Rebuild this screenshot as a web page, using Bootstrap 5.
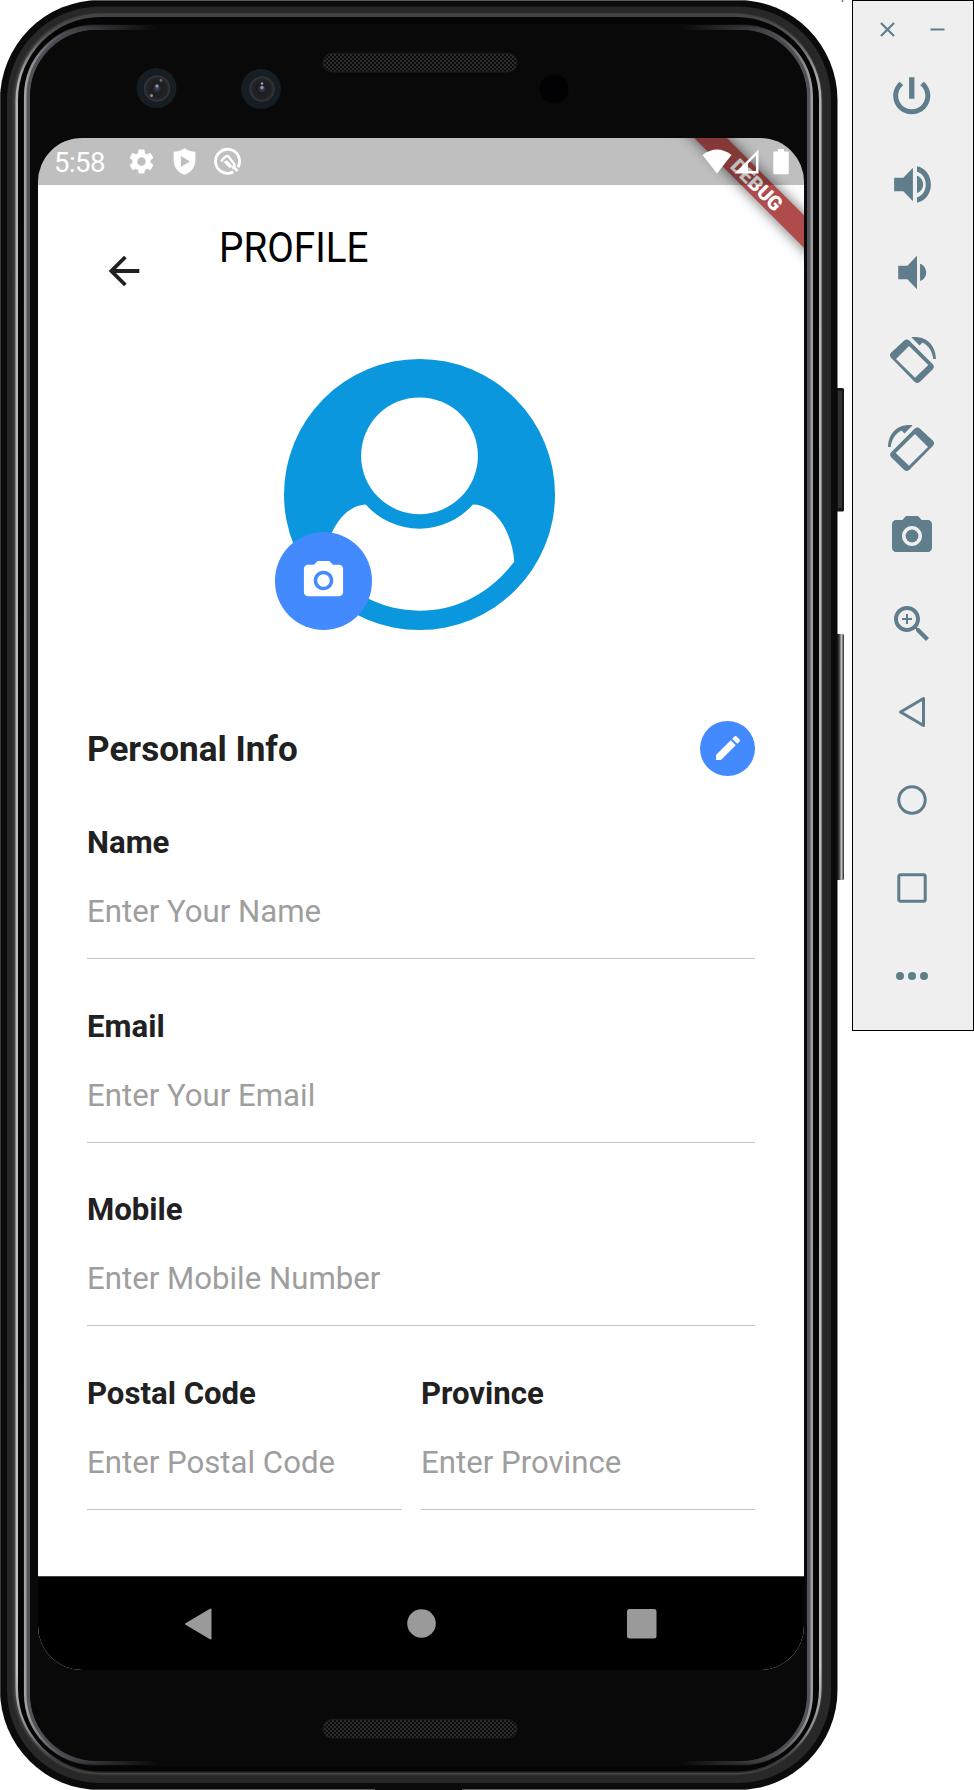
<!DOCTYPE html>
<html lang="en">
<head>
<meta charset="utf-8">
<meta name="viewport" content="width=device-width, initial-scale=1">
<title>Profile</title>
<link rel="stylesheet" href="https://cdn.jsdelivr.net/npm/bootstrap@5.3.0/dist/css/bootstrap.min.css">
<style>
  body { font-family: Roboto, "Liberation Sans", sans-serif; color: #212121; background: #fff; overflow: hidden; }
  svg { display: block; flex: none; }
  .phone { width: 844px; height: 1790px; padding: 138px 40px 0 38px; flex: none; }
  .phone-frame { left: 0; top: 0; }
  .screen { width: 766px; height: 1532px; border-radius: 44px; }
  .status-bar { height: 47px; background: rgba(0,0,0,.25); padding: 0 15px 0 16px; z-index: 2; }
  .clock { font-size: 27.5px; line-height: 47px; width: 73px; letter-spacing: -.5px; padding-top: 1px; }
  .debug-banner { width: 260px; height: 23.3px; left: 589px; top: 34.6px; transform: rotate(45deg); z-index: 1;
    background: #b04b4b; box-shadow: 0 0 14px rgba(0,0,0,.6); color: #fff; font-size: 20px; font-weight: 900; line-height: 24px; }
  .app-header { height: 130px; padding: 40px 0 0 63px; }
  .app-header .back { margin-top: 23px; color: #212121; }
  .app-title { font-size: 42px; line-height: 46px; color: #000; margin: 0 0 0 71.5px; font-weight: 400; transform: scaleX(.92); transform-origin: left; }
  .avatar { width: 271px; height: 271px; margin: 43.6px auto 0; left: -1.5px; }
  .avatar-camera { width: 97.5px; height: 97.5px; left: -9.5px; bottom: 0; background: #448aff; }
  .info { padding: 0 49px; }
  .info-head { height: 55px; margin: 91.400px 0 47.500px; }
  .info-title { font-size: 35.1px; line-height: 57px; font-weight: 700; }
  .edit-btn { width: 55px; height: 55px; background: #448aff; }
  .field { height: 183.4px; }
  .field label { display: block; font-size: 31.15px; line-height: 40px; font-weight: 700; }
  .field .form-control { height: 96px; padding: 2px 0 0; font-size: 31.2px; line-height: 40px; border: 0; border-bottom: 1.5px solid #c4c4c4; border-radius: 0; background: none; }
  .field .form-control::placeholder { color: #9e9e9e; opacity: 1; }
  .postal { width: 315px; margin-right: 19px; flex: none; }
  .province { flex: 1 1 0; min-width: 0; }
  .nav-keys { height: 94px; background: #000; border-top: 1px solid #444; }
  .tool-panel { width: 122px; height: 1030.5px; margin-left: 8px; padding-right: 2px; background: #efefef; border: 1.3px solid #000; color: #607d8b; flex: none; }
  .window-keys { height: 51px; padding-top: 6px; gap: 35px; }
  .tool { height: 88px; }
</style>
</head>
<body>
<div class="d-flex align-items-start">
  <main class="phone position-relative">
    <svg class="phone-frame position-absolute" width="846" height="1790" viewBox="0 0 846 1790">
      <defs>
        <linearGradient id="rim" x1="0" y1="0" x2="0" y2="1">
          <stop offset="0" stop-color="#444"/><stop offset=".012" stop-color="#555"/><stop offset=".035" stop-color="#a8a8a8"/><stop offset=".06" stop-color="#b4b4b4"/>
          <stop offset=".94" stop-color="#c4c4c4"/><stop offset=".975" stop-color="#8c8c8c"/><stop offset=".993" stop-color="#3a3a3a"/><stop offset="1" stop-color="#2a2a2a"/>
        </linearGradient>
        <linearGradient id="fade" gradientUnits="userSpaceOnUse" x1="24" y1="0" x2="814" y2="0">
          <stop offset="0" stop-color="#55555c"/><stop offset=".06" stop-color="#45454c"/><stop offset=".17" stop-color="#090909"/>
          <stop offset=".83" stop-color="#090909"/><stop offset=".94" stop-color="#45454c"/><stop offset="1" stop-color="#55555c"/>
        </linearGradient>
        <linearGradient id="fadeBright" gradientUnits="userSpaceOnUse" x1="24" y1="0" x2="814" y2="0">
          <stop offset="0" stop-color="#a4a4a6"/><stop offset=".03" stop-color="#68686c"/><stop offset=".09" stop-color="#222" stop-opacity=".4"/><stop offset=".12" stop-color="#090909" stop-opacity="0"/>
          <stop offset=".88" stop-color="#090909" stop-opacity="0"/><stop offset=".91" stop-color="#222" stop-opacity=".4"/><stop offset=".97" stop-color="#68686c"/><stop offset="1" stop-color="#a4a4a6"/>
        </linearGradient>
        <linearGradient id="key" x1="0" y1="0" x2="1" y2="0"><stop offset="0" stop-color="#111"/><stop offset=".45" stop-color="#333"/><stop offset=".72" stop-color="#c8c4c0"/><stop offset="1" stop-color="#222"/></linearGradient>
        <pattern id="mesh" width="4" height="4" patternUnits="userSpaceOnUse"><rect width="4" height="4" fill="#0c0c0c"/><circle cx="1" cy="1" r=".9" fill="#3a3a3a"/><circle cx="3" cy="3" r=".9" fill="#3a3a3a"/></pattern>
        <radialGradient id="lens"><stop offset="0" stop-color="#44465a"/><stop offset=".35" stop-color="#1c1c22"/><stop offset=".75" stop-color="#222326"/><stop offset=".95" stop-color="#35373a"/><stop offset="1" stop-color="#161e23"/></radialGradient>
      </defs>
      <rect x="834" y="388" width="10" height="123.500" rx="1.500" fill="#171818"/><rect x="838" y="391" width="4" height="117" fill="#303332"/>
      <rect x="835" y="634" width="9" height="246" rx="1.500" fill="url(#key)"/>
      <path d="M842.500 0v2" stroke="#777" stroke-width="1.500"/>
      <rect width="837.500" height="1790" rx="100" fill="#0b0b0b"/>
      <path d="M92 .5H746M94 1789.500H375M462 1789.500H745" stroke="#5a5a5a"/>
      <path d="M.5 92V1697" stroke="#3c3c3c"/>
      <rect x="7" y="6.500" width="824" height="1776.500" rx="93" fill="#282828"/>
      <rect x="12" y="12.500" width="811" height="1763" rx="89" fill="#333"/>
      <rect x="14" y="13.500" width="808" height="1761" rx="87" fill="#454545"/>
      <rect x="15.500" y="15" width="806" height="1758" rx="85" fill="url(#rim)"/>
      <rect x="18" y="17" width="801" height="1754.500" rx="83" fill="#050505"/>
      <rect x="23" y="24" width="791" height="1742" rx="74" fill="#090909"/>
      <rect x="27.500" y="27.500" width="782" height="1735" rx="69" fill="none" stroke="url(#fade)" stroke-width="5"/>
      <rect x="25.200" y="25.500" width="786.500" height="1739" rx="71" fill="none" stroke="url(#fadeBright)" stroke-width="2.500"/>
      <rect x="30.500" y="30" width="776" height="1731" rx="66" fill="#090909"/>
      <rect x="323" y="53.500" width="194" height="18.500" rx="9" fill="url(#mesh)" stroke="#1c1c1c"/>
      <rect x="323" y="1719.500" width="194" height="18.500" rx="9" fill="url(#mesh)" stroke="#1c1c1c"/>
      <circle cx="156.500" cy="88" r="20" fill="#161e23"/><circle cx="157" cy="88.500" r="13.500" fill="url(#lens)"/>
      <circle cx="157" cy="86" r="1.700" fill="#8d8fc0"/><circle cx="161" cy="80.500" r="1.400" fill="#766"/><circle cx="151.500" cy="95.500" r="1.500" fill="#a88"/>
      <circle cx="261" cy="89" r="20" fill="#161e23"/><circle cx="262" cy="89" r="13" fill="url(#lens)"/>
      <circle cx="262" cy="87.500" r="1.700" fill="#8a9ba8"/><circle cx="262" cy="83.500" r="1.200" fill="#9ab"/>
      <circle cx="554" cy="89" r="14.500" fill="#020204"/>
    </svg>

    <div class="screen position-relative overflow-hidden bg-white d-flex flex-column">
      <div class="debug-banner position-absolute text-center">DEBUG</div>
      <div class="status-bar position-relative d-flex align-items-center text-white">
        <span class="clock">5:58</span>
        <svg width="29" height="29" viewBox="0 0 24 24" fill="currentColor"><path d="M19.430 12.980c.04-.32.07-.64.07-.98s-.03-.66-.07-.98l2.110-1.650c.19-.15.24-.42.12-.64l-2-3.460c-.12-.22-.39-.3-.61-.22l-2.490 1c-.52-.4-1.080-.73-1.690-.98l-.38-2.650C14.460 2.180 14.250 2 14 2h-4c-.25 0-.46.18-.49.42l-.38 2.650c-.61.25-1.170.59-1.690.98l-2.490-1c-.23-.09-.49 0-.61.22l-2 3.460c-.13.22-.07.49.12.64l2.110 1.650c-.04.32-.07.65-.07.98s.03.66.07.98l-2.110 1.650c-.19.15-.24.42-.12.64l2 3.460c.12.22.39.3.61.22l2.490-1c.52.4 1.080.73 1.690.98l.38 2.650c.03.24.24.42.49.42h4c.25 0 .46-.18.49-.42l.38-2.650c.61-.25 1.170-.59 1.690-.98l2.490 1c.23.09.49 0 .61-.22l2-3.460c.12-.22.07-.49-.12-.64l-2.110-1.650zM12 15.500c-1.930 0-3.500-1.570-3.500-3.500s1.570-3.500 3.500-3.500 3.500 1.570 3.500 3.500-1.570 3.500-3.500 3.500z"/></svg>
        <svg style="margin-left:14px" width="29" height="29" viewBox="0 0 24 24" fill="currentColor" fill-rule="evenodd"><path d="M12 1C10 2.600 6.500 3.700 3 4v7c0 6 4 10.600 9 12 5-1.400 9-6 9-12V4C17.500 3.700 14 2.600 12 1zM9 7.500l7.500 4.500L9 16.500z"/></svg>
        <svg style="margin-left:14px" width="29" height="29" viewBox="0 0 29 29" fill="none" stroke="currentColor"><path d="M20.500 24.700A12 12 0 1 1 25 20.200" stroke-width="2.800"/><path d="M21 20.500l3.500 3.500" stroke-width="2.800"/><path d="M8 14.500Q13 7.500 15.500 9.500L21.500 17.500Q22 20 19 21" stroke-width="2.400"/><path d="M10.500 15l3.500-1.800 5.500 5.800-2.500 2.500z" fill="currentColor" stroke="none"/></svg>
        <svg class="ms-auto" width="30" height="25" viewBox="0 0 30 25" fill="currentColor"><path d="M.5 6Q15-5 29.500 6L15 24.500z"/></svg>
        <svg style="margin-left:2px" width="25" height="25" viewBox="0 0 25 25" fill="currentColor" fill-rule="evenodd"><path d="M24.500.5V24.500H.5zM22 6.500L14 14.500V22H22z"/></svg>
        <svg style="margin-left:14px" width="16" height="26" viewBox="0 0 16 26" fill="currentColor"><path d="M5 0h6v2.500h3.500q1.300 0 1.300 1.300V24q0 1.300-1.300 1.300h-13Q.3 25.300.3 24V3.800Q.3 2.500 1.500 2.500H5z"/></svg>
      </div>

      <header class="app-header d-flex align-items-start">
        <svg class="back" width="46" height="46" viewBox="0 0 24 24" fill="currentColor"><path d="M20 11H7.830l5.590-5.590L12 4l-8 8 8 8 1.410-1.410L7.830 13H20v-2z"/></svg>
        <h1 class="app-title">PROFILE</h1>
      </header>

      <div class="avatar position-relative">
        <svg width="271" height="271" viewBox="74 56 812 812">
          <circle cx="480" cy="462" r="406" fill="#0a97dd"/>
          <circle cx="480" cy="346" r="175" fill="#fff"/>
          <path fill="#fff" d="M319 492A214 214 0 0 0 640 492C705 492 757 570 764 663C690 760 590 810 480 810C370 810 270 760 196 663C203 570 255 495 319 492z"/>
        </svg>
        <div class="avatar-camera position-absolute rounded-circle d-flex align-items-center justify-content-center text-white">
          <svg width="47" height="47" viewBox="0 0 24 24" fill="currentColor"><circle cx="12" cy="12" r="3.200"/><path d="M9 2L7.170 4H4c-1.100 0-2 .9-2 2v12c0 1.100.9 2 2 2h16c1.100 0 2-.9 2-2V6c0-1.100-.9-2-2-2h-3.170L15 2H9zm3 15c-2.760 0-5-2.240-5-5s2.240-5 5-5 5 2.240 5 5-2.240 5-5 5z"/></svg>
        </div>
      </div>

      <form class="info">
        <div class="info-head d-flex justify-content-between">
          <h2 class="info-title mb-0">Personal Info</h2>
          <button type="button" class="edit-btn btn p-0 border-0 rounded-circle text-white d-flex align-items-center justify-content-center" aria-label="Edit">
            <svg width="32" height="32" viewBox="0 0 24 24" fill="currentColor"><path d="M3 17.250V21h3.750L17.810 9.940l-3.750-3.750L3 17.250zM20.710 7.040c.39-.39.39-1.020 0-1.410l-2.340-2.340c-.39-.39-1.020-.39-1.410 0l-1.830 1.830 3.750 3.750 1.830-1.830z"/></svg>
          </button>
        </div>
        <div class="field"><label for="name">Name</label><input id="name" class="form-control" placeholder="Enter Your Name"></div>
        <div class="field"><label for="email">Email</label><input id="email" class="form-control" placeholder="Enter Your Email"></div>
        <div class="field"><label for="mobile">Mobile</label><input id="mobile" class="form-control" placeholder="Enter Mobile Number"></div>
        <div class="d-flex">
          <div class="field postal"><label for="postal">Postal Code</label><input id="postal" class="form-control" placeholder="Enter Postal Code"></div>
          <div class="field province"><label for="province">Province</label><input id="province" class="form-control" placeholder="Enter Province"></div>
        </div>
      </form>

      <nav class="nav-keys position-absolute bottom-0 w-100 d-flex justify-content-center align-items-center">
        <svg width="475" height="34" viewBox="0 0 475 34" fill="#9a9a9a"><path d="M2 17L26.500 2.500V31.500z" stroke="#9a9a9a" stroke-width="2" stroke-linejoin="round"/><circle cx="237.500" cy="16.500" r="14.300"/><rect x="443" y="2" width="29.500" height="29.500" rx="2.500"/></svg>
      </nav>
    </div>
  </main>

  <aside class="tool-panel d-flex flex-column">
    <div class="window-keys d-flex justify-content-center align-items-center">
      <svg width="15" height="15" viewBox="0 0 15 15" stroke="currentColor" stroke-width="2.200"><path d="M1 1l13 13M14 1L1 14"/></svg>
      <svg width="15" height="15" viewBox="0 0 15 15" stroke="currentColor" stroke-width="2"><path d="M.5 7.500h14"/></svg>
    </div>
    <div class="tool d-flex align-items-center justify-content-center"><svg width="49.500" height="49.500" viewBox="0 0 24 24" fill="currentColor"><path d="M13.300 3h-2.600v10.500h2.600V3zm4.530 2.170l-1.700 1.700C17.700 8.100 18.600 9.900 18.600 12c0 3.650-2.950 6.600-6.600 6.600s-6.600-2.950-6.600-6.600c0-2.100.9-3.900 2.470-5.130l-1.700-1.700C4.230 6.820 3 9.260 3 12c0 4.970 4.030 9 9 9s9-4.030 9-9c0-2.740-1.230-5.180-3.170-6.830z"/></svg></div>
    <div class="tool d-flex align-items-center justify-content-center"><svg width="49" height="49" viewBox="0 0 24 24" fill="currentColor"><path d="M3 8.700v6.600h4.500l4.700 4.900V3.800L7.500 8.700H3zm14.200 3.300c0-1.770-1.020-3.600-3-4.230v8.450c1.980-.73 3-2.450 3-4.220zM14.200 3.100v2.600c2.600.7 4.300 3.300 4.300 6.300s-1.700 5.600-4.300 6.300v2.600c4-.7 6.800-4.400 6.800-8.900s-2.800-8.200-6.800-8.900z"/></svg></div>
    <div class="tool d-flex align-items-center justify-content-center"><svg width="49" height="49" viewBox="0 0 24 24" fill="currentColor"><path d="M18.700 12c0-1.770-1.020-3.600-3-4.230v8.450c1.980-.73 3-2.450 3-4.220zM5 8.700v6.600h4.500l4.700 4.900V3.800L9.500 8.700H5z"/></svg></div>
    <div class="tool d-flex align-items-center justify-content-center"><svg width="48" height="48" viewBox="0 0 48 48" fill="currentColor"><path fill-rule="evenodd" d="M16.200 4.500Q18.700 2.300 21.200 4.500L44.800 28.200Q47 30.700 44.800 33.200L31.800 46Q29.300 48.200 26.800 46L3 21.800Q.8 19.300 3 16.800zM21 10L8 23L27 41.700L40.300 29z"/><path d="M23.300 1.300C37-.5 47.500 8 48 23h-2.800C44.500 15.500 40.500 9.500 34.500 6.500L31.500 9.500z"/></svg></div>
    <div class="tool d-flex align-items-center justify-content-center"><svg width="48" height="48" viewBox="0 0 48 48" fill="currentColor"><g transform="translate(48 0) scale(-1 1)"><path fill-rule="evenodd" d="M16.200 4.500Q18.700 2.300 21.200 4.500L44.800 28.200Q47 30.700 44.800 33.200L31.800 46Q29.300 48.200 26.800 46L3 21.800Q.8 19.300 3 16.800zM21 10L8 23L27 41.700L40.300 29z"/><path d="M23.300 1.300C37-.5 47.500 8 48 23h-2.800C44.500 15.500 40.500 9.500 34.500 6.500L31.500 9.500z"/></g></svg></div>
    <div class="tool d-flex align-items-center justify-content-center"><svg width="48" height="48" viewBox="0 0 24 24" fill="currentColor"><circle cx="12" cy="12" r="3.200"/><path d="M9 2L7.170 4H4c-1.100 0-2 .9-2 2v12c0 1.100.9 2 2 2h16c1.100 0 2-.9 2-2V6c0-1.100-.9-2-2-2h-3.170L15 2H9zm3 15c-2.760 0-5-2.240-5-5s2.240-5 5-5 5 2.240 5 5-2.240 5-5 5z"/></svg></div>
    <div class="tool d-flex align-items-center justify-content-center"><svg width="48" height="48" viewBox="0 0 24 24" fill="currentColor"><path d="M15.500 14h-.79l-.28-.27C15.410 12.590 16 11.110 16 9.500 16 5.910 13.090 3 9.500 3S3 5.910 3 9.500 5.910 16 9.500 16c1.610 0 3.090-.59 4.230-1.570l.27.28v.79l5 4.990L20.490 19l-4.990-5zm-6 0C7.010 14 5 11.990 5 9.500S7.010 5 9.500 5 14 7.010 14 9.500 11.990 14 9.500 14zM12 10h-2v2H9v-2H7V9h2V7h1v2h2v1z"/></svg></div>
    <div class="tool d-flex align-items-center justify-content-center"><svg width="32" height="32" viewBox="0 0 32 32" fill="none" stroke="currentColor" stroke-width="3" stroke-linejoin="round"><path d="M4.500 16L27.500 2.500V29.500z"/></svg></div>
    <div class="tool d-flex align-items-center justify-content-center"><svg width="32" height="32" viewBox="0 0 32 32" fill="none" stroke="currentColor" stroke-width="3"><circle cx="16" cy="16" r="13.200"/></svg></div>
    <div class="tool d-flex align-items-center justify-content-center"><svg width="32" height="32" viewBox="0 0 32 32" fill="none" stroke="currentColor" stroke-width="3"><rect x="2.800" y="2.800" width="26.400" height="26.400" rx="1.500"/></svg></div>
    <div class="tool d-flex align-items-center justify-content-center"><svg width="32" height="8" viewBox="0 0 32 8" fill="currentColor"><circle cx="4" cy="4" r="4"/><circle cx="16" cy="4" r="4"/><circle cx="28" cy="4" r="4"/></svg></div>
  </aside>
</div>
<script src="https://cdn.jsdelivr.net/npm/bootstrap@5.3.0/dist/js/bootstrap.bundle.min.js"></script>
</body>
</html>
